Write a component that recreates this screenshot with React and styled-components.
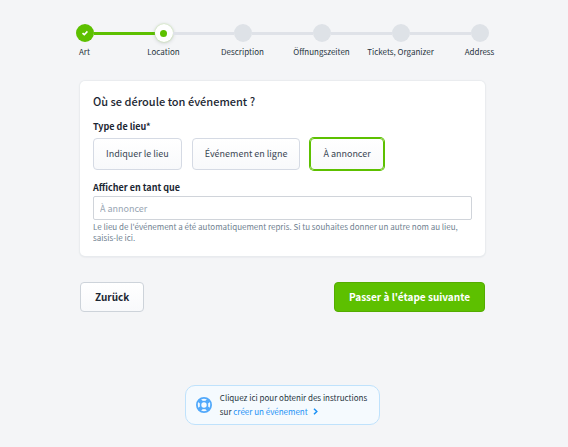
import { useState } from "react";
import styled, { createGlobalStyle, css } from "styled-components";

const GlobalStyle = createGlobalStyle`
  * {
    box-sizing: border-box;
  }

  body {
    margin: 0;
    background: #f4f5f7;
    color: #273440;
    font-family: "Noto Sans CJK SC", "Noto Sans", sans-serif;
    font-size: 9px;
    line-height: 14px;
  }

  button, input {
    font-family: inherit;
  }
`;

const Page = styled.main`
  padding: 24px 0 22px;
`;

/* -------- Stepper -------- */

const Steps = styled.ol`
  display: grid;
  grid-template-columns: repeat(6, 1fr);
  margin: 0;
  padding: 0 49px 0 45px;
  list-style: none;
`;

const Step = styled.li`
  display: flex;
  flex-direction: column;
  align-items: center;
  gap: 3px;
  font-size: 8px;
  white-space: nowrap;
`;

const Track = styled.div`
  display: flex;
  align-items: center;
  align-self: stretch;
`;

const lineColors = {
  none: "transparent",
  done: "#5dc000",
  open: "#dfe2e8",
};

const Line = styled.span`
  flex: 1;
  height: 3px;
  background: ${({ $state }) => lineColors[$state]};
`;

const Circle = styled.span`
  display: flex;
  align-items: center;
  justify-content: center;
  width: 18px;
  height: 18px;
  border-radius: 50%;
  background: #dee2e7;

  ${({ $state }) => $state === "done" && css`
    background: #5dc000;
  `}

  ${({ $state }) => $state === "current" && css`
    background: #fff;
    box-shadow: 0 0 2px #b4dd8c, 0 1px 4px rgba(39, 52, 64, 0.2);
  `}
`;

const Dot = styled.span`
  width: 7px;
  height: 7px;
  border-radius: 50%;
  background: #5dc000;
`;

/* -------- Form -------- */

const Content = styled.div`
  display: flex;
  flex-direction: column;
  gap: 26px;
  padding: 22px 83px 0 80px;
`;

const Card = styled.section`
  padding: 11px 13px 13px;
  border-radius: 5px;
  background: #fff;
  box-shadow: 0 0 1px 1px #e9ecef, 0 1px 2px rgba(39, 52, 64, 0.12);
`;

const Title = styled.h1`
  margin: 0 0 10px;
  color: #1c2733;
  font-size: 11px;
  font-weight: 500;
  line-height: 18px;
`;

const Field = styled.div`
  display: flex;
  flex-direction: column;
`;

const Label = styled.label`
  color: #1c2733;
  font-size: 9px;
  font-weight: 700;
  line-height: 14px;
`;

const Choices = styled.div`
  display: flex;
  gap: 10px;
  margin: 4px 0 11px;
`;

const Choice = styled.button`
  height: 32px;
  padding: 0 12px 2px;
  border: 1px solid #d5dae4;
  border-radius: 4px;
  background: linear-gradient(#fff, #f8f9fb);
  color: #3a4653;
  font-size: 9px;
  cursor: pointer;

  ${({ $active }) => $active && css`
    border-color: #5dc000;
    box-shadow: 0 0 0 1px #5dc000;
  `}
`;

const Input = styled.input`
  width: 100%;
  height: 24px;
  margin-top: 1px;
  padding: 0 6px;
  border: 1px solid #d0d4da;
  border-radius: 2px;
  background: #fff;
  color: #273440;
  font-size: 9px;

  &::placeholder {
    color: #98a5b3;
    opacity: 1;
  }
`;

const Hint = styled.p`
  margin: 1px 0 0;
  color: #6f7f90;
  font-size: 8px;
  line-height: 11px;
`;

const Actions = styled.div`
  display: flex;
  justify-content: space-between;
`;

const Action = styled.button`
  height: 30px;
  padding: 0 14px 2px;
  border: 1px solid #cdd3da;
  border-radius: 4px;
  background: linear-gradient(#fff, #f8f9fb);
  color: #1c2733;
  font-size: 10px;
  font-weight: 700;
  cursor: pointer;

  ${({ $primary }) => $primary && css`
    border-color: #54ac00;
    background: #5dc000;
    color: #fff;
  `}
`;

/* -------- Help -------- */

const Help = styled.aside`
  display: flex;
  align-items: center;
  align-self: center;
  gap: 8px;
  margin-top: 47px;
  padding: 5px 12px 5px 10px;
  border: 1px solid #bfe2fc;
  border-radius: 10px;
  background: #f5fafe;
  font-size: 8px;
`;

const HelpText = styled.p`
  margin: 0;
`;

const HelpLink = styled.a`
  color: #1b91f5;
  text-decoration: none;

  svg {
    margin-left: 3px;
  }
`;

const CheckIcon = () => (
  <svg width="8" height="8" viewBox="0 0 8 8" fill="none" aria-hidden="true">
    <path d="M1.5 4.1 3.3 5.7 6.4 2.4" stroke="#fff" strokeWidth="1.6" />
  </svg>
);

const LifeRingIcon = () => (
  <svg width="16" height="16" viewBox="0 0 16 16" fill="none" aria-hidden="true">
    <circle cx="8" cy="8" r="7.1" stroke="#52a9fb" strokeWidth="1.8" />
    <circle cx="8" cy="8" r="3.5" stroke="#52a9fb" strokeWidth="1.6" />
    <path
      d="M2.9 2.9 5.7 5.7M13.1 2.9 10.3 5.7M2.9 13.1 5.7 10.3M13.1 13.1 10.3 10.3"
      stroke="#52a9fb"
      strokeWidth="4"
    />
  </svg>
);

const ChevronIcon = () => (
  <svg width="5" height="7" viewBox="0 0 5 7" fill="none" aria-hidden="true">
    <path d="M1 .8 3.8 3.5 1 6.2" stroke="#1b91f5" strokeWidth="1.5" />
  </svg>
);

const steps = ["Art", "Location", "Description", "Öffnungszeiten", "Tickets, Organizer", "Address"];
const places = ["Indiquer le lieu", "Événement en ligne", "À annoncer"];
const current = 1;

const lineState = (index) => {
  if (index < 0 || index >= steps.length - 1) return "none";
  return index < current ? "done" : "open";
};

const circleState = (index) => {
  if (index === current) return "current";
  return index < current ? "done" : "open";
};

export default function App() {
  const [place, setPlace] = useState("À annoncer");
  const [name, setName] = useState("");

  return (
    <>
      <GlobalStyle />
      <Page>
        <Steps>
          {steps.map((step, index) => (
            <Step key={step} aria-current={index === current ? "step" : undefined}>
              <Track>
                <Line $state={lineState(index - 1)} />
                <Circle $state={circleState(index)}>
                  {index < current && <CheckIcon />}
                  {index === current && <Dot />}
                </Circle>
                <Line $state={lineState(index)} />
              </Track>
              {step}
            </Step>
          ))}
        </Steps>

        <Content>
          <Card>
            <Title>Où se déroule ton événement ?</Title>
            <Field>
              <Label as="span" id="place-label">Type de lieu*</Label>
              <Choices role="group" aria-labelledby="place-label">
                {places.map((item) => (
                  <Choice
                    key={item}
                    type="button"
                    $active={item === place}
                    aria-pressed={item === place}
                    onClick={() => setPlace(item)}
                  >
                    {item}
                  </Choice>
                ))}
              </Choices>
            </Field>
            <Field>
              <Label htmlFor="place-name">Afficher en tant que</Label>
              <Input
                id="place-name"
                type="text"
                placeholder="À annoncer"
                value={name}
                onChange={(event) => setName(event.target.value)}
              />
              <Hint>
                Le lieu de l'événement a été automatiquement repris. Si tu souhaites donner un autre nom au lieu,
                saisis-le ici.
              </Hint>
            </Field>
          </Card>

          <Actions>
            <Action type="button">Zurück</Action>
            <Action type="submit" $primary>Passer à l'étape suivante</Action>
          </Actions>

          <Help>
            <LifeRingIcon />
            <HelpText>
              Cliquez ici pour obtenir des instructions
              <br />
              sur <HelpLink href="#aide">créer un événement <ChevronIcon /></HelpLink>
            </HelpText>
          </Help>
        </Content>
      </Page>
    </>
  );
}
